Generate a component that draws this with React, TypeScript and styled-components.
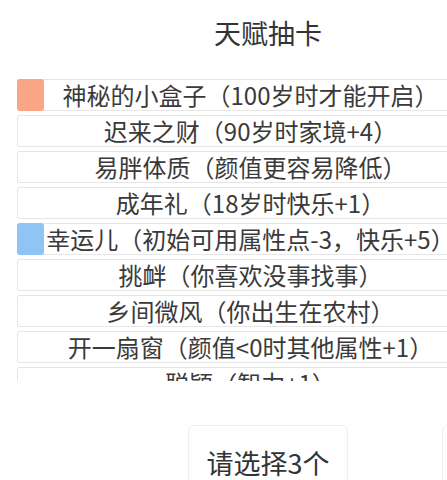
import { FC } from "react";
import styled, { createGlobalStyle } from "styled-components";

const GlobalStyle = createGlobalStyle`
	html, body {
		margin: 0;
		padding: 0;
		background: #fff;
		overflow: hidden;
	}
	body {
		font-family: "Noto Sans CJK SC", "Noto Sans", sans-serif;
		color: #333;
	}
`;

const Page = styled.div`
	width: 536px;
	display: flex;
	flex-direction: column;
`;

const Title = styled.h1`
	margin: 13px 0 0;
	font-size: 27px;
	font-weight: 400;
	line-height: 40px;
	text-align: center;
	color: #333;
`;

const TalentList = styled.ul`
	list-style: none;
	margin: 26px 0 0 17px;
	padding: 0;
	width: 462px;
	height: 302px;
	overflow: hidden;
	display: flex;
	flex-direction: column;
	gap: 4px;
`;

const TalentRow = styled.li`
	position: relative;
	flex: 0 0 auto;
	height: 32px;
	box-sizing: border-box;
	padding-left: 5px;
	border: 1px solid #e6e6e6;
	border-radius: 2px;
	background: #fff;
	font-size: 24px;
	line-height: 30px;
	text-align: center;
	white-space: nowrap;
	color: #3a3a3a;
`;

const Marker = styled.span<{ $color: string }>`
	position: absolute;
	left: -1px;
	top: -1px;
	width: 27px;
	height: 32px;
	border-radius: 3px;
	background: ${props => props.$color};
`;

const ButtonRow = styled.div`
	display: flex;
	gap: 94px;
	margin: 44px 0 0 188px;
`;

const ActionButton = styled.button`
	flex: 0 0 auto;
	width: 160px;
	height: 74px;
	border: 1px solid #efefef;
	border-radius: 6px;
	background: #fff;
	font-family: inherit;
	font-size: 27px;
	color: #333;
	padding: 0;
`;

type Talent = { name: string; color?: string };

const talents: Talent[] = [
	{ name: "神秘的小盒子（100岁时才能开启）", color: "#f9a586" },
	{ name: "迟来之财（90岁时家境+4）" },
	{ name: "易胖体质（颜值更容易降低）" },
	{ name: "成年礼（18岁时快乐+1）" },
	{ name: "幸运儿（初始可用属性点-3，快乐+5）", color: "#90c4f5" },
	{ name: "挑衅（你喜欢没事找事）" },
	{ name: "乡间微风（你出生在农村）" },
	{ name: "开一扇窗（颜值<0时其他属性+1）" },
	{ name: "聪颖（智力+1）" }
];

const App: FC = () => (
	<>
		<GlobalStyle />
		<Page>
			<Title>天赋抽卡</Title>
			<TalentList>
				{talents.map(talent => (
					<TalentRow key={talent.name}>
						{talent.color && <Marker $color={talent.color} />}
						{talent.name}
					</TalentRow>
				))}
			</TalentList>
			<ButtonRow>
				<ActionButton>请选择3个</ActionButton>
				<ActionButton>开始新人生</ActionButton>
			</ButtonRow>
		</Page>
	</>
);

export default App;
